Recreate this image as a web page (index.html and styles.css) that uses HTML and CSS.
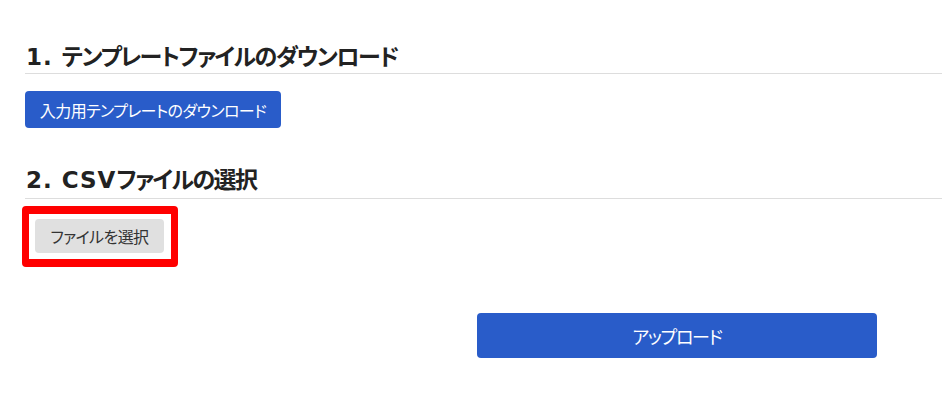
FILE: index.html
```html
<!DOCTYPE html>
<html lang="ja">
<head>
<meta charset="utf-8">
<title>CSV upload</title>
<link rel="stylesheet" href="styles.css">
</head>
<body>
<main class="page">
  <section class="section">
    <h2 class="section-title"><span class="latin">1. </span>テンプレートファイルのダウンロード</h2>
    <button class="btn btn-primary btn-download" type="button">入力用テンプレートのダウンロード</button>
  </section>
  <section class="section section-second">
    <h2 class="section-title"><span class="latin">2. CSV</span>ファイルの選択</h2>
    <div class="highlight">
      <button class="btn btn-file" type="button">ファイルを選択</button>
    </div>
  </section>
  <div class="actions">
    <button class="btn btn-primary btn-upload" type="button">アップロード</button>
  </div>
</main>
</body>
</html>
```
FILE: styles.css
```css
* { box-sizing: border-box; }
html, body {
  margin: 0;
  padding: 0;
  background: #ffffff;
}
body {
  font-family: "Noto Sans CJK JP", "Noto Sans", sans-serif;
  font-feature-settings: "palt";
  color: #222222;
}
.page {
  padding: 42px 0 0 25px;
}
.section-title {
  margin: 0;
  font-family: "DejaVu Sans", "Noto Sans CJK JP", sans-serif;
  font-size: 23px;
  font-weight: 700;
  line-height: 30px;
  height: 32px;
  letter-spacing: -1.5px;
  padding: 0 0 0 1px;
  border-bottom: 1px solid #dddddd;
  color: #222222;
}
.section-second .section-title {
  height: 34px;
}
.latin {
  letter-spacing: 1px;
}
.btn {
  font-family: "Noto Sans CJK JP", "Noto Sans", sans-serif;
  font-feature-settings: "palt";
  border: none;
  cursor: pointer;
  display: inline-flex;
  align-items: center;
  justify-content: center;
  white-space: nowrap;
}
.btn-primary {
  background: #295cc9;
  color: #ffffff;
  border-radius: 4px;
}
.btn-download {
  margin-top: 17px;
  width: 256px;
  height: 37px;
  font-size: 16px;
  letter-spacing: -0.6px;
  padding: 0;
}
.section-second {
  margin-top: 37px;
}
.highlight {
  display: inline-block;
  margin: 7px 0 0 -3px;
  border-style: solid;
  border-color: #ff0000;
  border-width: 8px 7px;
  border-radius: 4px;
  padding: 5px 7px 6px 6px;
}
.btn-file {
  display: flex;
  width: 129px;
  height: 34px;
  background: #e0e0e0;
  color: #333333;
  font-size: 16px;
  letter-spacing: -0.6px;
  border-radius: 4px;
  padding: 0;
}
.actions {
  margin-top: 46px;
  padding-left: 452px;
}
.btn-upload {
  width: 400px;
  height: 45px;
  font-size: 18px;
  letter-spacing: -1.3px;
  padding: 0;
}
```
